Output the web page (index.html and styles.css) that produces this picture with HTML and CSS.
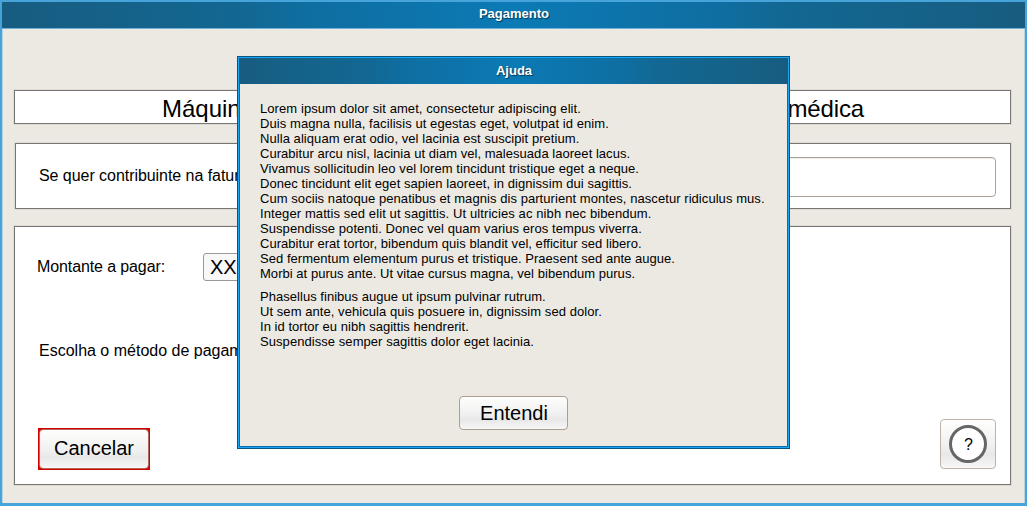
FILE: index.html
```html
<!DOCTYPE html>
<html lang="pt">
<head>
<meta charset="utf-8">
<title>Pagamento</title>
<link rel="stylesheet" href="styles.css">
</head>
<body>
<div class="window">
  <header class="titlebar">Pagamento</header>
  <main class="content">
    <h1 class="panel heading"><span>Máquin</span><span class="heading-end">médica</span></h1>
    <section class="panel taxpayer">
      <label for="nif">Se quer contribuinte na fatur</label>
      <input id="nif" class="field" type="text">
    </section>
    <section class="panel payment">
      <div class="amount"><span class="amount-label">Montante a pagar:</span><output class="amount-value">XX</output></div>
      <p class="method">Escolha o método de pagam</p>
      <div class="actions">
        <div class="cancel-frame"><button class="button cancel">Cancelar</button></div>
        <button class="button help" aria-label="Ajuda">
          <svg width="38" height="38" viewBox="0 0 38 38"><circle cx="19" cy="19" r="17.5" fill="#fff" stroke="#666" stroke-width="3"/></svg>
          <span class="help-mark">?</span>
        </button>
      </div>
    </section>
  </main>
</div>
<div class="dialog" role="dialog">
  <header class="titlebar dialog-title">Ajuda</header>
  <div class="dialog-body">
    <p>
      <span class="line wider">Lorem ipsum dolor sit amet, consectetur adipiscing elit.</span>
      <span class="line wider">Duis magna nulla, facilisis ut egestas eget, volutpat id enim.</span>
      <span class="line">Nulla aliquam erat odio, vel lacinia est suscipit pretium.</span>
      <span class="line tight">Curabitur arcu nisl, lacinia ut diam vel, malesuada laoreet lacus.</span>
      <span class="line">Vivamus sollicitudin leo vel lorem tincidunt tristique eget a neque.</span>
      <span class="line">Donec tincidunt elit eget sapien laoreet, in dignissim dui sagittis.</span>
      <span class="line">Cum sociis natoque penatibus et magnis dis parturient montes, nascetur ridiculus mus.</span>
      <span class="line widest">Integer mattis sed elit ut sagittis. Ut ultricies ac nibh nec bibendum.</span>
      <span class="line">Suspendisse potenti. Donec vel quam varius eros tempus viverra.</span>
      <span class="line tight">Curabitur erat tortor, bibendum quis blandit vel, efficitur sed libero.</span>
      <span class="line tight">Sed fermentum elementum purus et tristique. Praesent sed ante augue.</span>
      <span class="line tight">Morbi at purus ante. Ut vitae cursus magna, vel bibendum purus.</span>
    </p>
    <p>
      <span class="line tight">Phasellus finibus augue ut ipsum pulvinar rutrum.</span>
      <span class="line">Ut sem ante, vehicula quis posuere in, dignissim sed dolor.</span>
      <span class="line tight">In id tortor eu nibh sagittis hendrerit.</span>
      <span class="line">Suspendisse semper sagittis dolor eget lacinia.</span>
    </p>
    <button class="button confirm">Entendi</button>
  </div>
</div>
</body>
</html>
```

FILE: styles.css
```css
* { box-sizing: border-box; }
body {
  margin: 0;
  height: 506px;
  overflow: hidden;
  font-family: "Liberation Sans", Arial, sans-serif;
  font-size: 16px;
  color: #000;
}
h1, p { margin: 0; }
.window {
  width: 1027px;
  height: 506px;
  border: 2px solid #47a4da;
  border-bottom-width: 3px;
  background: #ece9e2;
}
.titlebar {
  height: 27px;
  padding: 1px 0 0 1px;
  border-bottom: 1px solid #72b2d7;
  background: linear-gradient(90deg, #185c80, #126893 24%, #0f6ea1 30%, #0b7ab5 50%, #0f6ea1 70%, #126893 76%, #185c80);
  color: #fff;
  font-size: 13px;
  font-weight: bold;
  line-height: 21px;
  text-align: center;
  text-shadow: 1px 1px 1px #063a58;
}
.content {
  display: flex;
  flex-direction: column;
  height: 474px;
  padding: 61px 13px 17px 11px;
  border: 1px solid #b9d3e0;
  border-width: 0 1px;
}
.panel {
  border: 1px solid #777673;
  background: #fff;
  box-shadow: 0 0 0 1px #dedbd5;
}
.heading {
  display: flex;
  justify-content: space-between;
  height: 34px;
  padding: 0 146px 0 147px;
  font-size: 24px;
  font-weight: normal;
  line-height: 36px;
}
.heading-end { letter-spacing: -0.15px; }
.taxpayer {
  display: flex;
  align-items: center;
  justify-content: space-between;
  height: 66px;
  margin: 19px 0 0 1px;
  padding: 0 14px 0 23px;
}
.taxpayer label { letter-spacing: -0.05px; }
.field {
  width: 480px;
  height: 40px;
  margin-top: 1px;
  border: 1px solid #aca398;
  border-radius: 4px;
  background: #fff;
  box-shadow: inset 0 1px #eeece8;
}
.payment {
  display: flex;
  flex-direction: column;
  height: 259px;
  margin-top: 17px;
  padding: 26px 14px 14px 22px;
}
.amount { display: flex; align-items: center; height: 28px; }
.amount-label { width: 166px; letter-spacing: -0.11px; }
.amount-value {
  width: 100px;
  height: 28px;
  padding-left: 6px;
  border: 1px solid #999;
  border-radius: 3px;
  background: #f8f8f8;
  font-size: 20px;
  line-height: 27px;
}
.method { margin: 61px 0 0 2px; line-height: 18px; }
.actions {
  display: flex;
  align-items: flex-end;
  justify-content: space-between;
  margin-top: auto;
  padding-left: 1px;
}
.button {
  border: 1px solid #a99f93;
  border-radius: 4px;
  padding: 0;
  background: linear-gradient(#fefefd, #f1f1f1 50%, #e8e8e8 72%, #f7f7f7);
  color: #000;
  font: 20px "Liberation Sans", Arial, sans-serif;
}
.cancel-frame { display: flex; width: 112px; height: 42px; padding: 1px; background: #d40000; }
.cancel { flex: 1; padding-bottom: 1px; border-color: #b5665a; }
.help {
  display: grid;
  place-items: center;
  width: 56px;
  height: 50px;
  border: 1px solid #bcb5a6;
  margin-bottom: 1px;
}
.help svg, .help-mark { grid-area: 1 / 1; }
.help-mark { padding: 1px 0 0 1px; font-size: 16px; }
.dialog {
  position: absolute;
  left: 237px;
  top: 56px;
  width: 553px;
  height: 393px;
  border: 1px solid #075681;
  background: #ece9e2;
  box-shadow: inset 0 0 0 1px #1ba5f5, inset 0 0 0 2px #086da8;
}
.dialog-title { height: 26px; margin: 1px 1px 0; border: 0; line-height: 23px; }
.dialog-body {
  display: flex;
  flex-direction: column;
  gap: 8px;
  height: 363px;
  padding: 17px 22px 17px;
  font-size: 13px;
  line-height: 15px;
  white-space: nowrap;
}
.line { display: block; letter-spacing: 0.062px; }
.line.tight { letter-spacing: 0.035px; }
.line.wider { letter-spacing: 0.08px; }
.line.widest { letter-spacing: 0.1px; }
.confirm { width: 109px; height: 34px; margin: auto auto 0 199px; padding-left: 1px; }
```
